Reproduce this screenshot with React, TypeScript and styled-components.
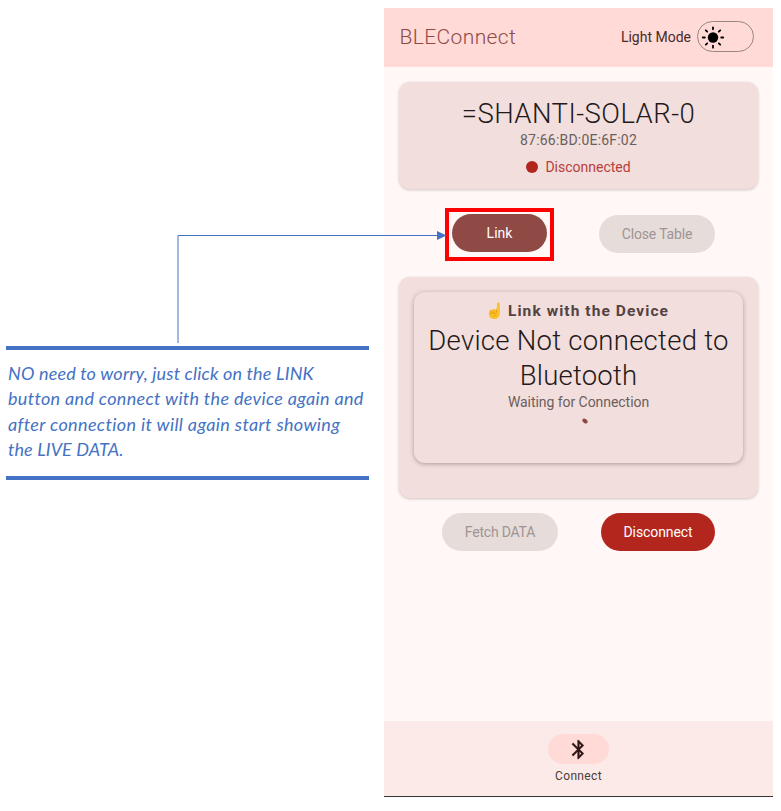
import React from "react";
import styled, { createGlobalStyle } from "styled-components";

const GlobalStyle = createGlobalStyle`
  body { margin: 0; background: #fff; }
  *, *::before, *::after { box-sizing: border-box; }
`;

const Page = styled.main`
  position: relative;
  width: 781px;
  height: 811px;
  padding: 8px 8px 14px 6px;
  display: flex;
  justify-content: space-between;
  overflow: hidden;
  background: #fff;
`;

const Note = styled.aside`
  width: 363px;
  height: 134px;
  margin-top: 338px;
  padding: 11px 0 0 2px;
  border-top: 4px solid #4472c4;
  border-bottom: 4px solid #4472c4;
  color: #4472c4;
  font: italic 400 18px/25.4px Lato, sans-serif;
  font-variant-ligatures: none;
`;

const NoteLine = styled.div<{ $ls: number }>`
  white-space: nowrap;
  letter-spacing: ${(p) => p.$ls}px;
`;

const Phone = styled.section`
  width: 389px;
  height: 789px;
  display: flex;
  flex-direction: column;
  background: #fff8f6;
  border-bottom: 1px solid #3a3436;
  font-family: Roboto, sans-serif;
`;

const Text = styled.span<{ $size: number; $line: number; $color: string; $weight?: number; $ls?: number }>`
  display: block;
  white-space: nowrap;
  font-size: ${(p) => p.$size}px;
  line-height: ${(p) => p.$line}px;
  color: ${(p) => p.$color};
  font-weight: ${(p) => p.$weight ?? 400};
  letter-spacing: ${(p) => p.$ls ?? 0}px;
`;

const Header = styled.header`
  height: 58.5px;
  flex: none;
  padding: 0 19px 0 15.5px;
  display: flex;
  align-items: center;
  justify-content: space-between;
  background: #ffdad7;
`;

const ModeSwitch = styled.div`
  display: flex;
  align-items: center;
  gap: 6px;
`;

const Toggle = styled.div`
  width: 57px;
  height: 31px;
  margin-top: -1px;
  padding-left: 3px;
  display: flex;
  align-items: center;
  border: 1px solid #988683;
  border-radius: 16px;
`;

const Card = styled.section<{ $height: number }>`
  flex: none;
  height: ${(p) => p.$height}px;
  margin: 0 15px;
  border-radius: 11px;
  background: #f1dedd;
  box-shadow: 0 1px 3px rgba(80, 40, 40, 0.26);
  display: flex;
  flex-direction: column;
  align-items: center;
`;

const DeviceCard = styled(Card)`
  margin-top: 15px;
  padding-top: 14.5px;
`;

const StatusCard = styled(Card)`
  margin-top: 24px;
  padding-top: 15px;
`;

const InnerCard = styled.div`
  width: 329px;
  height: 171px;
  padding-top: 9px;
  border-radius: 11px;
  background: #f1dedd;
  box-shadow: 0 1px 4px rgba(80, 40, 40, 0.38);
  display: flex;
  flex-direction: column;
  align-items: center;
`;

const Inline = styled.div<{ $gap: number }>`
  display: flex;
  align-items: center;
  gap: ${(p) => p.$gap}px;
`;

const Heading = styled(Inline)`
  margin-bottom: 3px;
`;

const Dot = styled.i`
  width: 12px;
  height: 12px;
  border-radius: 50%;
  background: #b3261e;
`;

const Actions = styled.div<{ $top: number; $left: number; $gap: number }>`
  display: flex;
  flex: none;
  align-items: center;
  height: 38px;
  margin-top: ${(p) => p.$top}px;
  padding-left: ${(p) => p.$left}px;
  gap: ${(p) => p.$gap}px;
`;

const tones = {
  primary: ["#904a46", "#fff"],
  danger: ["#b3261e", "#fff"],
  disabled: ["#e6dddb", "#9f9492"],
};

const Button = styled.button<{ $tone: keyof typeof tones; $width: number; $ls: number }>`
  width: ${(p) => p.$width}px;
  height: 38px;
  padding: 0;
  border: 0;
  border-radius: 19px;
  background: ${(p) => tones[p.$tone][0]};
  color: ${(p) => tones[p.$tone][1]};
  font: 400 14px/20px Roboto, sans-serif;
  letter-spacing: ${(p) => p.$ls}px;
  white-space: nowrap;
`;

const Highlight = styled.div`
  flex: none;
  display: flex;
  justify-content: center;
  width: 109px;
  height: 53px;
  margin-top: 1px;
  padding-top: 2px;
  border: 4px solid #fe0000;
`;

const Spinner = styled.i`
  width: 6px;
  height: 4px;
  margin: 7px 0 0 13px;
  border-radius: 50%;
  background: #904a46;
  transform: rotate(35deg);
`;

const BottomNav = styled.nav`
  height: 75px;
  margin-top: auto;
  padding-top: 13px;
  display: flex;
  flex-direction: column;
  align-items: center;
  background: #fceae8;
`;

const NavPill = styled.div`
  width: 61px;
  height: 30px;
  margin-bottom: 4px;
  border-radius: 15px;
  background: #ffdad7;
  display: grid;
  place-items: center;
`;

const Connector = styled.svg`
  position: absolute;
  left: 170px;
  top: 225px;
`;

const SunIcon = () => (
  <svg width="24" height="24" viewBox="-12 -12.5 24 24">
    <circle r="5.2" fill="#000" />
    {[0, 45, 90, 135, 180, 225, 270, 315].map((a) => (
      <path key={a} d="M0-8.2V-10.2" stroke="#000" strokeWidth="1.8" strokeLinecap="round" transform={`rotate(${a})`} />
    ))}
  </svg>
);

const BluetoothIcon = () => (
  <svg width="23" height="23" viewBox="0 0 24 24" fill="#2c1513" stroke="#2c1513" strokeWidth=".2">
    <path d="M17.71 7.71 12 2h-1v7.59L6.41 5 5 6.41 10.59 12 5 17.59 6.41 19 11 14.41V22h1l5.71-5.71L13.41 12zM13 5.83l1.88 1.88L13 9.59zm1.88 10.46L13 18.17v-3.76z" />
  </svg>
);

const PointingHand = () => (
  <svg width="14" height="18" viewBox="0 0 14 18">
    <path d="M9.1 1.5c0-1.5 2.7-1.5 2.7 0v8.2c.5 4.3-1.6 7.4-5.4 7.4-3.6 0-5.5-2.3-5.5-5.2 0-2.2.7-3.5 2.1-3.8 1-.8 2-.9 2.8-.4.9-.7 2.1-.5 2.7.2z" fill="#fbc02d" />
    <path d="M3 8.3v3M5.8 7.8v3.1M2.7 11.7c2.2-1.2 5-.8 5.4.5.3 1.2-1.8 1.1-2.8 1.9M8.5 8v2.6" fill="none" stroke="#e59600" strokeWidth=".7" strokeLinecap="round" />
  </svg>
);

export default function App() {
  return (
    <>
      <GlobalStyle />
      <Page>
        <Note>
          <NoteLine $ls={0.18}>NO need to worry, just click on the LINK</NoteLine>
          <NoteLine $ls={0.33}>button and connect with the device again and</NoteLine>
          <NoteLine $ls={0.37}>after connection it will again start showing</NoteLine>
          <NoteLine $ls={0.1}>the LIVE DATA.</NoteLine>
        </Note>
        <Phone>
          <Header>
            <Text $size={21} $line={28} $color="#904a46" $weight={300} $ls={0.38}>BLEConnect</Text>
            <ModeSwitch>
              <Text $size={14} $line={20} $color="#4a2a29">Light Mode</Text>
              <Toggle><SunIcon /></Toggle>
            </ModeSwitch>
          </Header>
          <DeviceCard $height={107.5}>
            <Text $size={27.5} $line={35} $color="#231918" $weight={300} $ls={0.45}>=SHANTI-SOLAR-0</Text>
            <Text $size={14} $line={19} $color="#6c5e5c" $ls={0.2}>87:66:BD:0E:6F:02</Text>
            <Inline $gap={7}>
              <Dot />
              <Text $size={14} $line={34} $color="#b8403a">Disconnected</Text>
            </Inline>
          </DeviceCard>
          <Actions $top={26} $left={61} $gap={45}>
            <Highlight><Button $tone="primary" $width={95} $ls={0}>Link</Button></Highlight>
            <Button $tone="disabled" $width={116} $ls={-0.15}>Close Table</Button>
          </Actions>
          <StatusCard $height={221}>
            <InnerCard>
              <Heading $gap={6}>
                <PointingHand />
                <Text $size={15.5} $line={20} $color="#534341" $weight={700} $ls={1.08}>Link with the Device</Text>
              </Heading>
              <Text $size={27.5} $line={34.5} $color="#231918" $weight={300} $ls={0.26}>Device Not connected to</Text>
              <Text $size={27.5} $line={34.5} $color="#231918" $weight={300} $ls={0.2}>Bluetooth</Text>
              <Text $size={14} $line={19} $color="#6c5e5c" $ls={-0.05}>Waiting for Connection</Text>
              <Spinner />
            </InnerCard>
          </StatusCard>
          <Actions $top={15} $left={58} $gap={43}>
            <Button $tone="disabled" $width={116} $ls={-0.2}>Fetch DATA</Button>
            <Button $tone="danger" $width={114} $ls={-0.1}>Disconnect</Button>
          </Actions>
          <BottomNav>
            <NavPill><BluetoothIcon /></NavPill>
            <Text $size={12} $line={16} $color="#4a3b3a" $ls={0.35}>Connect</Text>
          </BottomNav>
        </Phone>
        <Connector width="278" height="119" viewBox="0 0 278 119" fill="none">
          <path d="M8 118V10.5H268" stroke="#4472c4" strokeWidth="1" />
          <path d="M267 6L276.500 10.500L267 15Z" fill="#4472c4" />
        </Connector>
      </Page>
    </>
  );
}
